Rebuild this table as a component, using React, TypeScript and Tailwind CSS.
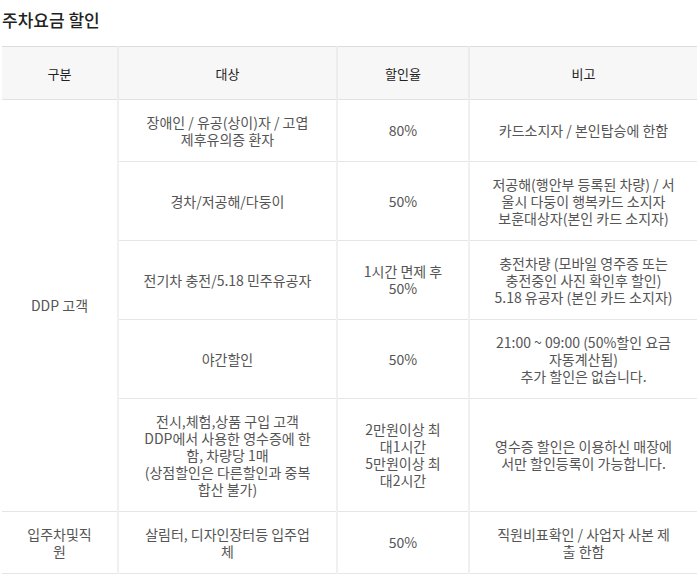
const rows: { target: string[]; rate: string[]; note: string[] }[] = [
  { target: ['장애인 / 유공(상이)자 / 고엽', '제후유의증 환자'], rate: ['80%'], note: ['카드소지자 / 본인탑승에 한함'] },
  { target: ['경차/저공해/다둥이'], rate: ['50%'], note: ['저공해(행안부 등록된 차량) / 서', '울시 다둥이 행복카드 소지자', '보훈대상자(본인 카드 소지자)'] },
  { target: ['전기차 충전/5.18 민주유공자'], rate: ['1시간 면제 후', '50%'], note: ['충전차량 (모바일 영주증 또는', '충전중인 사진 확인후 할인)', '5.18 유공자 (본인 카드 소지자)'] },
  { target: ['야간할인'], rate: ['50%'], note: ['21:00 ~ 09:00 (50%할인 요금', '자동계산됨)', '추가 할인은 없습니다.'] },
  {
    target: ['전시,체험,상품 구입 고객', 'DDP에서 사용한 영수증에 한', '함, 차량당 1매', '(상점할인은 다른할인과 중복', '합산 불가)'],
    rate: ['2만원이상 최', '대1시간', '5만원이상 최', '대2시간'],
    note: ['영수증 할인은 이용하신 매장에', '서만 할인등록이 가능합니다.'],
  },
]

function Lines({ lines }: { lines: string[] }) {
  return <>{lines.map((l, i) => <div key={i} className="whitespace-nowrap">{l}</div>)}</>
}

const td = 'border-l-2 border-b border-l-[#f0f0f0] border-b-[#e6e6e6] text-center align-middle py-[13.5px] px-1'

export default function App() {
  return (
    <div className="bg-white pl-[2px] pr-[3px] text-[14px] leading-[17px] text-[#555]" style={{ fontFamily: '"Noto Sans CJK KR", "Noto Sans", sans-serif' }}>
      <h2 className="text-[17px] leading-[24px] font-medium text-[#222] pt-[8px] pb-[14px]">주차요금 할인</h2>
      <table className="w-full border-collapse border-t border-t-[#dcdcdc] table-fixed">
        <colgroup>
          <col className="w-[116px]" />
          <col className="w-[219px]" />
          <col className="w-[132px]" />
          <col />
        </colgroup>
        <thead>
          <tr className="bg-[#f7f7f7] h-[53px] text-[13px] text-[#222]">
            <th className="font-normal border-b border-b-[#e2e2e2]">구분</th>
            <th className="font-normal border-b border-l-2 border-b-[#e2e2e2] border-l-[#ececec]">대상</th>
            <th className="font-normal border-b border-l-2 border-b-[#e2e2e2] border-l-[#ececec]">할인율</th>
            <th className="font-normal border-b border-l-2 border-b-[#e2e2e2] border-l-[#ececec]">비고</th>
          </tr>
        </thead>
        <tbody>
          {rows.map((r, i) => (
            <tr key={i}>
              {i === 0 && <td rowSpan={5} className="border-b border-b-[#e6e6e6] text-center align-middle">DDP 고객</td>}
              <td className={td}><Lines lines={r.target} /></td>
              <td className={td}><Lines lines={r.rate} /></td>
              <td className={td}><Lines lines={r.note} /></td>
            </tr>
          ))}
          <tr>
            <td className="border-b border-b-[#e6e6e6] text-center align-middle py-[13.5px]"><Lines lines={['입주차및직', '원']} /></td>
            <td className={td}><Lines lines={['살림터, 디자인장터등 입주업', '체']} /></td>
            <td className={td}><Lines lines={['50%']} /></td>
            <td className={td}><Lines lines={['직원비표확인 / 사업자 사본 제', '출 한함']} /></td>
          </tr>
        </tbody>
      </table>
    </div>
  )
}
